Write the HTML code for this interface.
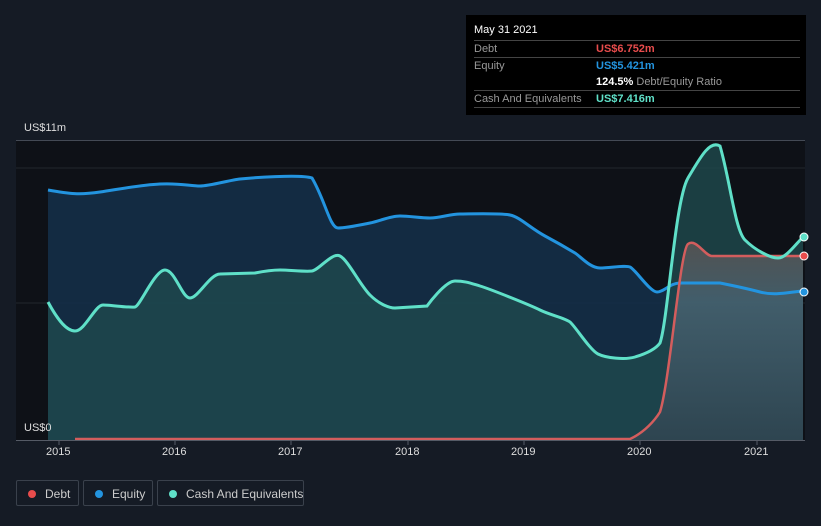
<!DOCTYPE html><html><head><style>
body{margin:0;background:#151b25;width:821px;height:526px;overflow:hidden;font-family:"Liberation Sans",sans-serif;position:relative}
.tt{position:absolute;left:466px;top:15px;width:340px;height:100px;background:#000;color:#fff;font-size:11px}
.row{position:absolute;left:8px;width:326px;border-top:1px solid #444;height:16px;line-height:17px}
.lab{color:#999}
.v{position:absolute;left:122px;font-weight:bold}
.leg{position:absolute;top:480px;height:26px;border:1px solid #3a414c;border-radius:2px;color:#ccc;font-size:12px;line-height:26px;box-sizing:border-box;white-space:nowrap}
.dot{position:absolute;left:11px;top:9px;width:8px;height:8px;border-radius:50%}
.ax{position:absolute;color:#ddd;font-size:11px}
</style></head><body>
<svg width="821" height="526" style="position:absolute;left:0;top:0">
<defs><linearGradient id="g" x1="0" y1="0" x2="0" y2="1"><stop offset="0" stop-color="#6a5a58" stop-opacity=".7"/><stop offset=".3" stop-color="#5a6f80" stop-opacity=".6"/><stop offset="1" stop-color="#3a4654" stop-opacity=".6"/></linearGradient></defs>
<rect x="16" y="140" width="789" height="300" fill="#0e1117"/>
<line x1="16" y1="140.5" x2="805" y2="140.5" stroke="#444a55"/>
<line x1="16" y1="168" x2="805" y2="168" stroke="#22262d"/>
<line x1="16" y1="303" x2="805" y2="303" stroke="#22262d"/>
<path d="M48,190 C70,194 80,195 100,192 S140,185 160,184 S190,186 200,186 S230,180 240,179 S300,174 312,178 C325,200 330,228 338,228 S360,225 370,223 S390,216 400,216 S420,218 430,218 S450,214 460,214 S500,213 510,215 S530,228 545,236 S570,250 575,253 S590,268 600,268 S625,265 630,267 S650,292 657,292 S670,283 680,283 L720,283 S745,288 760,292 S790,292 803,291 L803,440 L48,440Z" fill="#14304a" opacity=".85"/>
<path d="M48,302 C55,315 65,331 75,331 S95,305 103,305 S130,308 135,307 S155,270 165,270 S182,298 190,298 S210,274 220,274 L255,273 S270,270 280,270 S305,272 312,271 S332,252 340,256 S360,285 370,295 S390,308 395,308 L427,306 S445,281 455,281 S470,283 480,286 S530,305 540,310 S565,318 570,322 S590,350 598,354 S625,360 635,357 S655,350 660,343 C668,320 675,200 688,178 S710,140 720,146 C730,180 735,230 745,240 S770,258 778,258 S795,245 803,237 L803,440 L48,440Z" fill="#1f4a4d" opacity=".8"/>
<path d="M75,439 L630,439 C645,432 655,420 660,412 C670,380 680,250 688,244 S705,256 712,256 L740,256 L803,256 L803,440 L75,440Z" fill="url(#g)"/>
<path d="M48,190 C70,194 80,195 100,192 S140,185 160,184 S190,186 200,186 S230,180 240,179 S300,174 312,178 C325,200 330,228 338,228 S360,225 370,223 S390,216 400,216 S420,218 430,218 S450,214 460,214 S500,213 510,215 S530,228 545,236 S570,250 575,253 S590,268 600,268 S625,265 630,267 S650,292 657,292 S670,283 680,283 L720,283 S745,288 760,292 S790,292 803,291" fill="none" stroke="#2394df" stroke-width="3"/>
<path d="M75,439 L630,439 C645,432 655,420 660,412 C670,380 680,250 688,244 S705,256 712,256 L740,256 L803,256" fill="none" stroke="#d35d5d" stroke-width="2.5"/>
<path d="M48,302 C55,315 65,331 75,331 S95,305 103,305 S130,308 135,307 S155,270 165,270 S182,298 190,298 S210,274 220,274 L255,273 S270,270 280,270 S305,272 312,271 S332,252 340,256 S360,285 370,295 S390,308 395,308 L427,306 S445,281 455,281 S470,283 480,286 S530,305 540,310 S565,318 570,322 S590,350 598,354 S625,360 635,357 S655,350 660,343 C668,320 675,200 688,178 S710,140 720,146 C730,180 735,230 745,240 S770,258 778,258 S795,245 803,237" fill="none" stroke="#5fe0c8" stroke-width="3"/>
<line x1="16" y1="440.5" x2="805" y2="440.5" stroke="#555b66"/>
<g stroke="#555b66"><line x1="59" y1="440" x2="59" y2="445"/><line x1="175" y1="440" x2="175" y2="445"/><line x1="291" y1="440" x2="291" y2="445"/><line x1="408" y1="440" x2="408" y2="445"/><line x1="524" y1="440" x2="524" y2="445"/><line x1="640" y1="440" x2="640" y2="445"/><line x1="757" y1="440" x2="757" y2="445"/></g>
<circle cx="804" cy="237" r="4" fill="#5fe0c8" stroke="#fff"/><circle cx="804" cy="256" r="4" fill="#e84c4c" stroke="#fff"/><circle cx="804" cy="292" r="4" fill="#2394df" stroke="#fff"/>
</svg>
<div class="ax" style="left:24px;top:122px">US$11m</div>
<div class="ax" style="left:24px;top:422px">US$0</div>
<div class="ax" style="left:46px;top:446px">2015</div><div class="ax" style="left:162px;top:446px">2016</div><div class="ax" style="left:278px;top:446px">2017</div><div class="ax" style="left:395px;top:446px">2018</div><div class="ax" style="left:511px;top:446px">2019</div><div class="ax" style="left:627px;top:446px">2020</div><div class="ax" style="left:744px;top:446px">2021</div>
<div class="tt">
<div style="position:absolute;left:8px;top:9px">May 31 2021</div>
<div class="row" style="top:25px"><span class="lab">Debt</span><span class="v" style="color:#e84c4c">US$6.752m</span></div>
<div class="row" style="top:42px"><span class="lab">Equity</span><span class="v" style="color:#2394df">US$5.421m</span></div>
<div class="row" style="top:59px;border:none"><span class="v">124.5% <span style="color:#999;font-weight:normal">Debt/Equity Ratio</span></span></div>
<div class="row" style="top:75px"><span class="lab">Cash And Equivalents</span><span class="v" style="color:#5fe0c8">US$7.416m</span></div>
<div class="row" style="top:92px;height:0"></div>
</div>
<div class="leg" style="left:16px;width:63px"><span class="dot" style="background:#e84c4c"></span><span style="margin-left:28px">Debt</span></div>
<div class="leg" style="left:83px;width:70px"><span class="dot" style="background:#2394df"></span><span style="margin-left:28px">Equity</span></div>
<div class="leg" style="left:157px;width:147px"><span class="dot" style="background:#5fe0c8"></span><span style="margin-left:28px">Cash And Equivalents</span></div>
</body></html>
